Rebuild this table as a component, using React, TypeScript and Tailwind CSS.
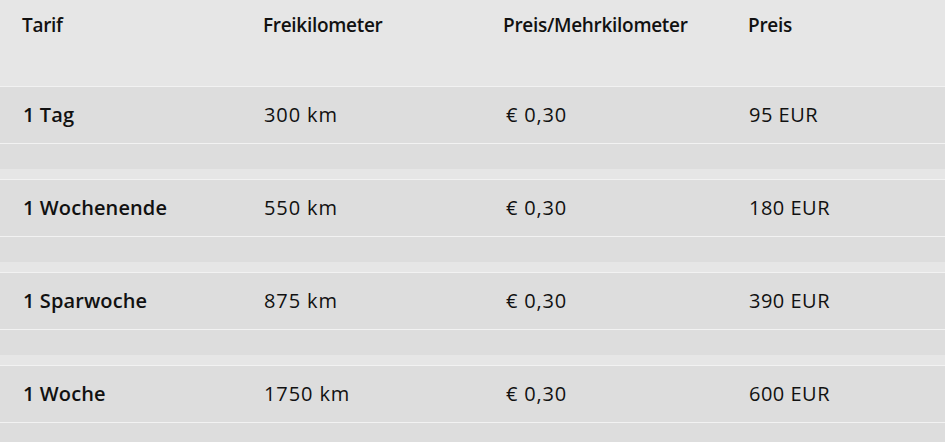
import React from "react";

const rows = [
  ["1 Tag", "300 km", "€ 0,30", "95 EUR"],
  ["1 Wochenende", "550 km", "€ 0,30", "180 EUR"],
  ["1 Sparwoche", "875 km", "€ 0,30", "390 EUR"],
  ["1 Woche", "1750 km", "€ 0,30", "600 EUR"],
];

export default function App() {
  return (
    <div
      className="w-[945px] h-[442px] overflow-hidden bg-[#e6e6e6] text-[#111111]"
      style={{ fontFamily: "'Open Sans', 'Noto Sans', sans-serif" }}
    >
      <div className="h-[86px] grid grid-cols-[241px_240px_245px_1fr] pl-[22px] pt-[12px] text-[19px] font-semibold leading-[26px] tracking-[-0.3px]">
        <div>Tarif</div>
        <div>Freikilometer</div>
        <div>Preis/Mehrkilometer</div>
        <div>Preis</div>
      </div>
      {rows.map((r) => (
        <div key={r[0]} className="mb-[10px]">
          <div className="h-[58px] border-y border-[#f2f2f2] bg-[#dddddd] grid grid-cols-[241px_240px_245px_1fr] items-center pl-[23px] text-[20px] leading-[26px]">
            <div className="font-semibold tracking-[0.1px]">{r[0]}</div>
            <div className="tracking-[0.9px]">{r[1]}</div>
            <div className="pl-[2px] tracking-[0.8px]">{r[2]}</div>
            <div className="tracking-[0.5px]">{r[3]}</div>
          </div>
          <div className="h-[25px] bg-[#dddddd]" />
        </div>
      ))}
    </div>
  );
}
